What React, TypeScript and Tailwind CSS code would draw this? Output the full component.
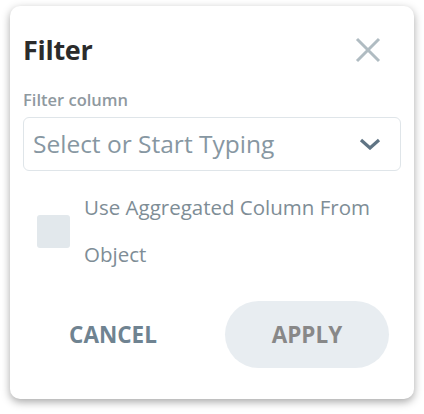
export default function App() {
  return (
    <div
      className="h-[414px] w-[424px] bg-white pl-[10px] pt-[6px]"
      style={{ fontFamily: '"Open Sans", "Noto Sans", sans-serif' }}
    >
      <div className="flex h-[393px] w-[404px] flex-col rounded-[10px] bg-white px-[13px] shadow-[0_3px_8px_rgba(0,0,0,0.35)]">
        {/* Header */}
        <div className="mt-[24px] flex h-[40px] items-center justify-between">
          <h1 className="text-[27px] font-bold leading-[40px] tracking-[-0.3px] text-[#2b2b2b]">Filter</h1>
          <button className="mr-[20px] flex h-[26px] w-[26px] items-center justify-center">
            <svg width="26" height="26" viewBox="0 0 26 26" fill="none" stroke="#b0bcc2" strokeWidth="3">
              <path d="M2 2 L24 24 M24 2 L2 24" />
            </svg>
          </button>
        </div>

        {/* Filter column */}
        <label className="mt-[20px] text-[16.5px] font-semibold leading-[20px] text-[#8f999f]">Filter column</label>
        <div className="mt-[7px] flex h-[54px] items-center justify-between rounded-[6px] border border-[#dfe5e9] pl-[9px] pr-[19px]">
          <span className="text-[24.5px] leading-none text-[#8797a2]">Select or Start Typing</span>
          <svg width="22" height="12" viewBox="0 0 22 12" fill="none" stroke="#5f7484" strokeWidth="3.2">
            <path d="M2 2 L11 10 L20 2" />
          </svg>
        </div>

        {/* Aggregated checkbox */}
        <div className="mt-[13px] flex items-center">
          <div className="ml-[14px] h-[33px] w-[33px] rounded-[3px] bg-[#e2e8ec]" />
          <p className="ml-[14px] w-[300px] text-[20.5px] leading-[47px] text-[#7e8d96]">
            Use Aggregated Column From Object
          </p>
        </div>

        {/* Actions */}
        <div className="mt-[23px] flex items-center">
          <button className="ml-[10px] w-[160px] text-[22.5px] font-bold uppercase text-[#6f8391]">Cancel</button>
          <button className="ml-[32px] h-[67px] w-[164px] rounded-full bg-[#e8edf1] text-[22.5px] font-bold uppercase text-[#888888]">
            Apply
          </button>
        </div>
      </div>
    </div>
  );
}
